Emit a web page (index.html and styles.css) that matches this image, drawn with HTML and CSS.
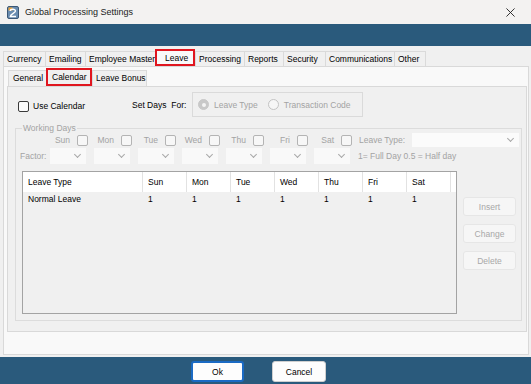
FILE: index.html
```html
<!DOCTYPE html>
<html lang="en">
<head>
  <meta charset="UTF-8">
  <meta name="viewport" content="width=device-width, initial-scale=1.0">
  <title>Global Processing Settings</title>
  <link rel="stylesheet" href="styles.css">
</head>
<body>
  <div class="window">
    <div class="titlebar">
      <svg class="app-icon" viewBox="0 0 12 13">
        <rect x="0.5" y="0.5" width="11" height="12" rx="1.5" fill="#6a8cb0" stroke="#3b5877"/>
        <rect x="1.5" y="1.5" width="4" height="3" fill="#e9a23b"/>
        <path d="M3.2 5 C3.4 2.6 8.8 2.6 8.4 5.2 C8 7.2 3.6 7.6 3.4 10.4 H9" stroke="#fff" stroke-width="1.5" fill="none"/>
      </svg>
      <span class="title">Global Processing Settings</span>
      <svg class="close" viewBox="0 0 10 10">
        <path d="M0.5 0.5 L9.5 9.5 M9.5 0.5 L0.5 9.5" stroke="#1f1f1f" stroke-width="1"/>
      </svg>
    </div>
    <div class="band"></div>

    <div class="content">
      <div class="tabs">
        <span class="tab t-currency">Currency</span>
        <span class="tab t-emailing">Emailing</span>
        <span class="tab t-employee">Employee Master</span>
        <span class="tab t-leave active">Leave</span>
        <span class="tab t-processing">Processing</span>
        <span class="tab t-reports">Reports</span>
        <span class="tab t-security">Security</span>
        <span class="tab t-comms">Communications</span>
        <span class="tab t-other">Other</span>
      </div>

      <div class="page">
        <div class="subtabs">
          <span class="subtab s-general">General</span>
          <span class="subtab s-calendar active">Calendar</span>
          <span class="subtab s-bonus">Leave Bonus</span>
        </div>

        <div class="subpage">
          <div class="top-row">
            <div class="use-cal"><span class="check"></span>Use Calendar</div>
            <span class="set-days">Set Days&nbsp; For:</span>
            <div class="radio-box">
              <span class="radio on"></span><span class="muted">Leave Type</span>
              <span class="radio second"></span><span class="muted">Transaction Code</span>
            </div>
          </div>

          <fieldset class="working">
            <legend>Working Days</legend>
            <div class="day-grid">
              <span></span>
              <span class="day">Sun<span class="check off"></span></span>
              <span class="day">Mon<span class="check off"></span></span>
              <span class="day">Tue<span class="check off"></span></span>
              <span class="day">Wed<span class="check off"></span></span>
              <span class="day">Thu<span class="check off"></span></span>
              <span class="day">Fri<span class="check off"></span></span>
              <span class="day">Sat<span class="check off"></span></span>
              <span class="leave-type">Leave Type:<span class="combo wide"></span></span>

              <span class="factor">Factor:</span>
              <span class="combo"></span>
              <span class="combo"></span>
              <span class="combo"></span>
              <span class="combo"></span>
              <span class="combo"></span>
              <span class="combo"></span>
              <span class="combo"></span>
              <span class="note">1= Full Day 0.5 = Half day</span>
            </div>

            <div class="grid-area">
              <div class="grid">
                <div class="grid-line head">
                  <span>Leave Type</span><span>Sun</span><span>Mon</span><span>Tue</span><span>Wed</span><span>Thu</span><span>Fri</span><span>Sat</span><span></span>
                </div>
                <div class="grid-line">
                  <span>Normal Leave</span><span>1</span><span>1</span><span>1</span><span>1</span><span>1</span><span>1</span><span>1</span><span></span>
                </div>
              </div>
              <div class="side-buttons">
                <button class="side-btn">Insert</button>
                <button class="side-btn">Change</button>
                <button class="side-btn">Delete</button>
              </div>
            </div>
          </fieldset>
        </div>
      </div>
    </div>

    <div class="footer">
      <button class="btn focus">Ok</button>
      <button class="btn">Cancel</button>
    </div>
  </div>
</body>
</html>
```

FILE: styles.css
```css
* {
  margin: 0;
  padding: 0;
  box-sizing: border-box;
}
body {
  width: 531px;
  height: 384px;
  overflow: hidden;
  font-family: "Liberation Sans", Arial, sans-serif;
  font-size: 8.5px;
  color: #000;
  background: #f0f0f0;
}
.window {
  display: flex;
  flex-direction: column;
  height: 384px;
}

/* title bar */
.titlebar {
  height: 24px;
  display: flex;
  align-items: center;
  padding: 0 16px 0 7px;
  background: #f3f2f1;
}
.app-icon {
  width: 12px;
  height: 13px;
}
.title {
  flex: 1;
  margin-left: 6px;
  font-size: 9px;
  color: #1b1b1b;
}
.close {
  width: 9px;
  height: 9px;
}
.band {
  height: 22px;
  background: #2a5a7c;
}

/* main tabs */
.content {
  height: 311px;
  padding: 3px 2px 2px 3px;
  background: #f0f0f0;
}
.tabs {
  display: flex;
  align-items: flex-end;
  height: 17px;
}
.tab {
  height: 15px;
  line-height: 14px;
  padding-left: 3px;
  border: 1px solid #dadada;
  border-bottom: 0;
  border-right: 0;
  background: #f0f0f0;
  white-space: nowrap;
  overflow: hidden;
}
.tab.active {
  height: 17px;
  line-height: 14px;
  padding-left: 8px;
  border: 2px solid #e0161f;
  background: #f9f9f9;
}
.t-currency { width: 42px; }
.t-emailing { width: 40px; }
.t-employee { width: 70px; }
.t-leave { width: 40px; }
.t-processing { width: 49px; }
.t-reports { width: 39px; }
.t-security { width: 42px; }
.t-comms { width: 69px; }
.t-other { width: 32px; border-right: 1px solid #dadada; }

.page {
  height: 289px;
  border: 1px solid #d9d9d9;
  background: #f9f9f9;
  padding: 1px 0 0 3px;
}

/* sub tabs */
.subtabs {
  display: flex;
  align-items: flex-end;
  height: 18px;
  padding-left: 1px;
}
.subtab {
  height: 16px;
  line-height: 15px;
  padding-left: 4px;
  border: 1px solid #dadada;
  border-bottom: 0;
  border-right: 0;
  background: #f0f0f0;
  white-space: nowrap;
}
.subtab.active {
  height: 18px;
  line-height: 15px;
  padding-left: 4px;
  border: 2px solid #e0161f;
  background: #f0f0f0;
}
.s-general { width: 38px; }
.s-calendar { width: 46px; }
.s-bonus { width: 55px; padding-left: 3px; border-right: 1px solid #dadada; }

.subpage {
  width: 520px;
  height: 246px;
  border: 1px solid #d9d9d9;
  background: #f0f0f0;
}

/* top row */
.top-row {
  display: flex;
  align-items: center;
  height: 25px;
  margin-top: 5px;
  padding-left: 10px;
}
.use-cal {
  display: flex;
  align-items: center;
  gap: 4px;
  width: 114px;
  padding-top: 3px;
}
.set-days {
  width: 60px;
  white-space: pre;
}
.radio-box {
  display: flex;
  align-items: center;
  width: 171px;
  height: 25px;
  padding-left: 5px;
  border: 1px solid #dadada;
}
.radio {
  position: relative;
  width: 11px;
  height: 11px;
  margin-right: 5px;
  border: 1px solid #c3c3c3;
  border-radius: 50%;
  background: #f6f6f6;
}
.radio.on {
  background: #c8c8c8;
  border-color: #c8c8c8;
}
.radio.on::after {
  content: "";
  position: absolute;
  left: 2.5px;
  top: 2.5px;
  width: 4px;
  height: 4px;
  border-radius: 50%;
  background: #f4f4f4;
}
.radio.second {
  margin-left: 10px;
}
.muted {
  color: #a3a3a3;
}

/* checkboxes */
.check {
  display: inline-block;
  width: 11px;
  height: 11px;
  border: 1px solid #3a3a3a;
  border-radius: 2px;
  background: #fbfbfb;
}
.check.off {
  border-color: #b4b4b4;
  background: #f7f7f7;
}

/* working days group */
.working {
  margin: 7px 4px 0 7px;
  padding: 0 0 6px;
  border: 1px solid #dcdcdc;
}
.working legend {
  margin-left: 6px;
  padding: 0 1px;
  line-height: 9px;
  color: #a3a3a3;
}
.day-grid {
  display: grid;
  grid-template-columns: 34px repeat(7, 44px) 1fr;
  grid-template-rows: 14px 16px;
  row-gap: 1px;
  align-items: center;
  color: #a3a3a3;
}
.day {
  display: flex;
  justify-content: flex-end;
  align-items: center;
  gap: 7px;
  padding-right: 6px;
}
.leave-type {
  display: flex;
  align-items: center;
  padding-left: 1px;
}
.factor {
  padding-left: 4px;
}
.combo {
  display: flex;
  justify-content: flex-end;
  align-items: center;
  width: 36px;
  height: 16px;
  padding-right: 6px;
  background: #f9f9f9;
}
.combo::after {
  content: "";
  width: 4px;
  height: 4px;
  margin-top: -3px;
  border-right: 1px solid #a8a8a8;
  border-bottom: 1px solid #a8a8a8;
  transform: rotate(45deg);
}
.combo.wide {
  width: 107px;
  height: 14px;
  margin-left: 7px;
  background: #fbfbfb;
}
.note {
  white-space: nowrap;
}

/* data grid */
.grid-area {
  display: flex;
  align-items: flex-start;
  margin: 7px 0 0 6px;
}
.grid {
  width: 435px;
  height: 143px;
  border: 1px solid #a3a3a3;
  background: #f0f0f0;
}
.grid-line {
  display: grid;
  grid-template-columns: 120px repeat(7, 44px) 1fr;
  height: 14px;
  line-height: 14px;
}
.grid-line span {
  padding-left: 5px;
  white-space: nowrap;
}
.grid-line.head {
  height: 20px;
  line-height: 20px;
  background: #fff;
}
.grid-line.head span {
  border-right: 1px solid #e2e2e2;
}
.grid-line.head span:last-child {
  border-right: 0;
}
.side-buttons {
  display: flex;
  flex-direction: column;
  gap: 8px;
  margin: 26px 0 0 6px;
}
.side-btn {
  width: 53px;
  height: 19px;
  border: 1px solid #e6e6e6;
  border-radius: 3px;
  background: #f6f6f6;
  font: inherit;
  color: #a8a8a8;
}

/* footer */
.footer {
  display: flex;
  gap: 28px;
  height: 27px;
  padding: 4px 0 0 191px;
  background: #2a5a7c;
}
.btn {
  width: 53px;
  height: 21px;
  border: 1px solid #cfcfcf;
  border-radius: 3px;
  background: #fdfdfd;
  font: inherit;
  color: #000;
}
.btn.focus {
  border: 2px solid #1a6ac4;
}
.btn + .btn {
  width: 54px;
}
```
